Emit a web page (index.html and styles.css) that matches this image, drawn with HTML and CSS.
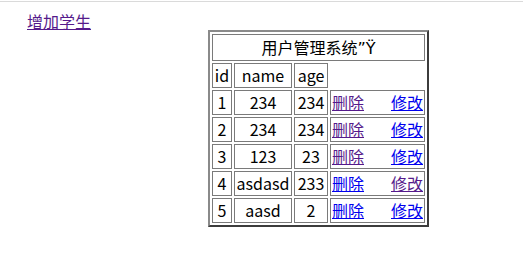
FILE: index.html
```html
<!DOCTYPE html>
<html lang="zh">

<head>
    <meta charset="UTF-8">
    <meta name="viewport" content="width=device-width, initial-scale=1.0">
    <title>用户管理系统</title>
    <link rel="stylesheet" href="styles.css">
</head>

<body>
    <div class="topline"></div>
    <div class="page">
        <a class="add-link visited" href="#add">增加学生</a>

        <table class="users">
            <tr>
                <th class="title" colspan="4">用户管理系统<span class="latin">”Ÿ</span></th>
            </tr>
            <tr>
                <td class="c-id">id</td>
                <td class="c-name">name</td>
                <td class="c-age">age</td>
            </tr>
            <tr>
                <td>1</td>
                <td>234</td>
                <td>234</td>
                <td class="c-ops"><div class="ops"><a class="visited" href="#d1">删除</a><a href="#e1">修改</a></div></td>
            </tr>
            <tr>
                <td>2</td>
                <td>234</td>
                <td>234</td>
                <td class="c-ops"><div class="ops"><a class="visited" href="#d2">删除</a><a href="#e2">修改</a></div></td>
            </tr>
            <tr>
                <td>3</td>
                <td>123</td>
                <td>23</td>
                <td class="c-ops"><div class="ops"><a class="visited" href="#d3">删除</a><a href="#e3">修改</a></div></td>
            </tr>
            <tr>
                <td>4</td>
                <td>asdasd</td>
                <td>233</td>
                <td class="c-ops"><div class="ops"><a href="#d4">删除</a><a class="visited" href="#e4">修改</a></div></td>
            </tr>
            <tr>
                <td>5</td>
                <td>aasd</td>
                <td>2</td>
                <td class="c-ops"><div class="ops"><a href="#d5">删除</a><a href="#e5">修改</a></div></td>
            </tr>
        </table>
    </div>
</body>

</html>
```

FILE: styles.css
```css
* {
    margin: 0;
    padding: 0;
}

body {
    font-family: "Noto Sans CJK SC", "DejaVu Sans", sans-serif;
    font-size: 16px;
    line-height: 21px;
    color: #000;
    background: #fff;
}

.topline {
    margin-top: 1px;
    height: 1px;
    background-color: #dadada;
}

.page {
    padding: 9px 0 0 27px;
}

a {
    color: #0000ee;
    text-decoration: underline;
}

a.visited {
    color: #551a8b;
}

.add-link {
    display: inline-block;
}

.users {
    margin: -2px 0 0 181px;
    border: 2px solid;
    border-color: #8a8a8a #3c3c3c #3c3c3c #8a8a8a;
    border-spacing: 2px;
}

.users td,
.users th {
    border: 1px solid #7a7a7a;
    padding: 1px;
    text-align: center;
    font-weight: normal;
}

.users .title {
    padding: 2px 1px 1px;
}

.latin {
    font-family: "DejaVu Sans", sans-serif;
}

.c-id {
    width: 16px;
}

.c-name {
    width: 54px;
}

.c-age {
    width: 30px;
}

.c-ops {
    width: 91px;
}

.ops {
    display: flex;
    justify-content: space-between;
}
```
